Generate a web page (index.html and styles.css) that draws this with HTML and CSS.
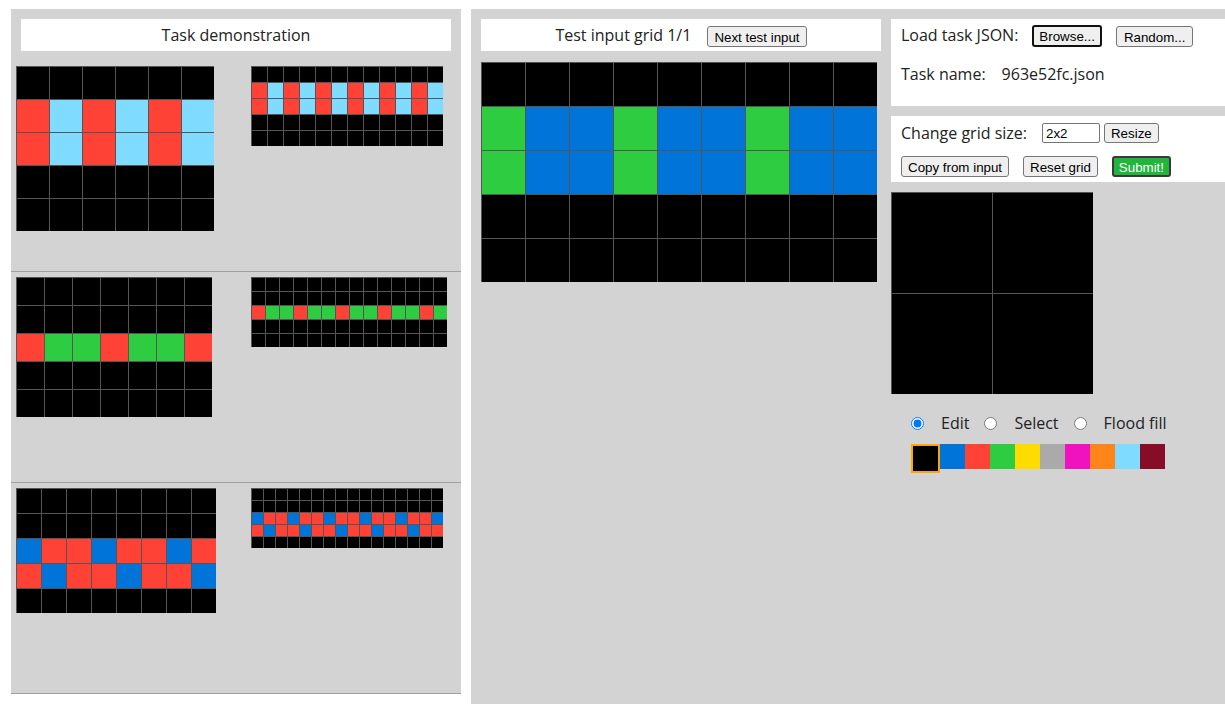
FILE: index.html
```html
<!DOCTYPE html>
<html>
<head>
<meta charset="utf-8">
<title>ARC testing interface</title>
<link rel="stylesheet" href="styles.css">
</head>
<body>
<div class="workspace">
  <section class="demo">
    <div class="demo-title">Task demonstration</div>
    <div class="pairs">
      <div class="pair">
        <div class="pair-in">
          <div class="grid s33">
            <div class="r"><i></i><i></i><i></i><i></i><i></i><i></i></div>
            <div class="r"><i class="k2"></i><i class="k8"></i><i class="k2"></i><i class="k8"></i><i class="k2"></i><i class="k8"></i></div>
            <div class="r"><i class="k2"></i><i class="k8"></i><i class="k2"></i><i class="k8"></i><i class="k2"></i><i class="k8"></i></div>
            <div class="r"><i></i><i></i><i></i><i></i><i></i><i></i></div>
            <div class="r"><i></i><i></i><i></i><i></i><i></i><i></i></div>
          </div>
        </div>
        <div class="pair-out">
          <div class="grid s16">
            <div class="r"><i></i><i></i><i></i><i></i><i></i><i></i><i></i><i></i><i></i><i></i><i></i><i></i></div>
            <div class="r"><i class="k2"></i><i class="k8"></i><i class="k2"></i><i class="k8"></i><i class="k2"></i><i class="k8"></i><i class="k2"></i><i class="k8"></i><i class="k2"></i><i class="k8"></i><i class="k2"></i><i class="k8"></i></div>
            <div class="r"><i class="k2"></i><i class="k8"></i><i class="k2"></i><i class="k8"></i><i class="k2"></i><i class="k8"></i><i class="k2"></i><i class="k8"></i><i class="k2"></i><i class="k8"></i><i class="k2"></i><i class="k8"></i></div>
            <div class="r"><i></i><i></i><i></i><i></i><i></i><i></i><i></i><i></i><i></i><i></i><i></i><i></i></div>
            <div class="r"><i></i><i></i><i></i><i></i><i></i><i></i><i></i><i></i><i></i><i></i><i></i><i></i></div>
          </div>
        </div>
      </div>
      <div class="pair">
        <div class="pair-in">
          <div class="grid s28">
            <div class="r"><i></i><i></i><i></i><i></i><i></i><i></i><i></i></div>
            <div class="r"><i></i><i></i><i></i><i></i><i></i><i></i><i></i></div>
            <div class="r"><i class="k2"></i><i class="k3"></i><i class="k3"></i><i class="k2"></i><i class="k3"></i><i class="k3"></i><i class="k2"></i></div>
            <div class="r"><i></i><i></i><i></i><i></i><i></i><i></i><i></i></div>
            <div class="r"><i></i><i></i><i></i><i></i><i></i><i></i><i></i></div>
          </div>
        </div>
        <div class="pair-out">
          <div class="grid s14">
            <div class="r"><i></i><i></i><i></i><i></i><i></i><i></i><i></i><i></i><i></i><i></i><i></i><i></i><i></i><i></i></div>
            <div class="r"><i></i><i></i><i></i><i></i><i></i><i></i><i></i><i></i><i></i><i></i><i></i><i></i><i></i><i></i></div>
            <div class="r"><i class="k2"></i><i class="k3"></i><i class="k3"></i><i class="k2"></i><i class="k3"></i><i class="k3"></i><i class="k2"></i><i class="k3"></i><i class="k3"></i><i class="k2"></i><i class="k3"></i><i class="k3"></i><i class="k2"></i><i class="k3"></i></div>
            <div class="r"><i></i><i></i><i></i><i></i><i></i><i></i><i></i><i></i><i></i><i></i><i></i><i></i><i></i><i></i></div>
            <div class="r"><i></i><i></i><i></i><i></i><i></i><i></i><i></i><i></i><i></i><i></i><i></i><i></i><i></i><i></i></div>
          </div>
        </div>
      </div>
      <div class="pair">
        <div class="pair-in">
          <div class="grid s25">
            <div class="r"><i></i><i></i><i></i><i></i><i></i><i></i><i></i><i></i></div>
            <div class="r"><i></i><i></i><i></i><i></i><i></i><i></i><i></i><i></i></div>
            <div class="r"><i class="k1"></i><i class="k2"></i><i class="k2"></i><i class="k1"></i><i class="k2"></i><i class="k2"></i><i class="k1"></i><i class="k2"></i></div>
            <div class="r"><i class="k2"></i><i class="k1"></i><i class="k2"></i><i class="k2"></i><i class="k1"></i><i class="k2"></i><i class="k2"></i><i class="k1"></i></div>
            <div class="r"><i></i><i></i><i></i><i></i><i></i><i></i><i></i><i></i></div>
          </div>
        </div>
        <div class="pair-out">
          <div class="grid s12">
            <div class="r"><i></i><i></i><i></i><i></i><i></i><i></i><i></i><i></i><i></i><i></i><i></i><i></i><i></i><i></i><i></i><i></i></div>
            <div class="r"><i></i><i></i><i></i><i></i><i></i><i></i><i></i><i></i><i></i><i></i><i></i><i></i><i></i><i></i><i></i><i></i></div>
            <div class="r"><i class="k1"></i><i class="k2"></i><i class="k2"></i><i class="k1"></i><i class="k2"></i><i class="k2"></i><i class="k1"></i><i class="k2"></i><i class="k2"></i><i class="k1"></i><i class="k2"></i><i class="k2"></i><i class="k1"></i><i class="k2"></i><i class="k2"></i><i class="k1"></i></div>
            <div class="r"><i class="k2"></i><i class="k1"></i><i class="k2"></i><i class="k2"></i><i class="k1"></i><i class="k2"></i><i class="k2"></i><i class="k1"></i><i class="k2"></i><i class="k2"></i><i class="k1"></i><i class="k2"></i><i class="k2"></i><i class="k1"></i><i class="k2"></i><i class="k2"></i></div>
            <div class="r"><i></i><i></i><i></i><i></i><i></i><i></i><i></i><i></i><i></i><i></i><i></i><i></i><i></i><i></i><i></i><i></i></div>
          </div>
        </div>
      </div>
    </div>
  </section>

  <section class="test-panel">
    <div class="test-col">
      <div class="test-title">
        <span>Test input grid 1/1</span>
        <button class="btn next-btn">Next test input</button>
      </div>
      <div class="grid s44 test-grid">
        <div class="r"><i></i><i></i><i></i><i></i><i></i><i></i><i></i><i></i><i></i></div>
        <div class="r"><i class="k3"></i><i class="k1"></i><i class="k1"></i><i class="k3"></i><i class="k1"></i><i class="k1"></i><i class="k3"></i><i class="k1"></i><i class="k1"></i></div>
        <div class="r"><i class="k3"></i><i class="k1"></i><i class="k1"></i><i class="k3"></i><i class="k1"></i><i class="k1"></i><i class="k3"></i><i class="k1"></i><i class="k1"></i></div>
        <div class="r"><i></i><i></i><i></i><i></i><i></i><i></i><i></i><i></i><i></i></div>
        <div class="r"><i></i><i></i><i></i><i></i><i></i><i></i><i></i><i></i><i></i></div>
      </div>
    </div>

    <div class="ctrl-col">
      <div class="box box-load">
        <div class="row row-load">
          <span>Load task JSON:</span>
          <button class="btn btn-browse">Browse...</button>
          <button class="btn btn-random">Random...</button>
        </div>
        <div class="row row-name">
          <span>Task name:</span>
          <span class="task-name">963e52fc.json</span>
        </div>
      </div>
      <div class="box box-edit">
        <div class="row row-size">
          <span>Change grid size:</span>
          <input class="size-input" type="text" value="2x2">
          <button class="btn btn-resize">Resize</button>
        </div>
        <div class="row row-actions">
          <button class="btn">Copy from input</button>
          <button class="btn btn-gap">Reset grid</button>
          <button class="btn btn-gap btn-submit">Submit!</button>
        </div>
      </div>
      <div class="grid s101 out-grid">
        <div class="r"><i></i><i></i></div>
        <div class="r"><i></i><i></i></div>
      </div>
      <div class="tools">
        <input type="radio" name="tool" id="t-edit" checked><label for="t-edit">Edit</label>
        <input type="radio" name="tool" id="t-select"><label for="t-select">Select</label>
        <input type="radio" name="tool" id="t-fill"><label for="t-fill">Flood fill</label>
      </div>
      <div class="palette">
        <span class="sw k0 selected"></span>
        <span class="sw k1"></span>
        <span class="sw k2"></span>
        <span class="sw k3"></span>
        <span class="sw k4"></span>
        <span class="sw k5"></span>
        <span class="sw k6"></span>
        <span class="sw k7"></span>
        <span class="sw k8"></span>
        <span class="sw k9"></span>
      </div>
    </div>
  </section>
</div>
</body>
</html>
```

FILE: styles.css
```css
html, body {
  margin: 0;
  padding: 0;
  overflow: hidden;
  background: #fff;
}

body {
  font-family: "Open Sans", "Noto Sans", sans-serif;
  font-size: 16px;
  color: #222;
}

.workspace {
  display: flex;
  align-items: flex-start;
  padding: 9px 0 0 11px;
}

/* ---------- demonstration panel ---------- */
.demo {
  flex: none;
  width: 450px;
  background: #d3d3d3;
  padding-top: 10px;
}

.demo-title {
  margin: 0 10px;
  height: 32px;
  background: #fff;
  display: flex;
  align-items: center;
  justify-content: center;
}

.pairs {
  margin-top: 10px;
}

.pair {
  display: flex;
  align-items: flex-start;
  box-sizing: border-box;
  height: 211px;
  padding: 5px 0 0 5px;
  border-bottom: 1px solid #a0a0a0;
}

.pair-in {
  flex: none;
  width: 235px;
}

/* ---------- grids ---------- */
.grid {
  display: inline-flex;
  flex-direction: column;
  vertical-align: top;
}

.grid .r {
  display: flex;
}

.grid i {
  display: block;
  box-sizing: border-box;
  width: var(--s);
  height: var(--s);
  border-left: 1px solid #555;
  border-top: 1px solid #555;
  background: #000;
}

.s12 { --s: 12px; }
.s14 { --s: 14px; }
.s16 { --s: 16px; }
.s25 { --s: 25px; }
.s28 { --s: 28px; }
.s33 { --s: 33px; }
.s44 { --s: 44px; }
.s101 { --s: 101px; }

.k0 { background: #000 !important; }
.k1 { background: #0074d9 !important; }
.k2 { background: #ff4136 !important; }
.k3 { background: #2ecc40 !important; }
.k4 { background: #ffdc00 !important; }
.k5 { background: #aaaaaa !important; }
.k6 { background: #f012be !important; }
.k7 { background: #ff851b !important; }
.k8 { background: #7fdbff !important; }
.k9 { background: #870c25 !important; }

/* ---------- test panel ---------- */
.test-panel {
  flex: none;
  margin-left: 10px;
  width: 744px;
  height: 675px;
  background: #d3d3d3;
  padding: 10px 0 10px 10px;
  display: flex;
  align-items: flex-start;
  overflow: hidden;
}

.test-col {
  flex: none;
  width: 400px;
}

.test-title {
  height: 32px;
  background: #fff;
  display: flex;
  align-items: center;
  justify-content: center;
}

.test-grid {
  margin-top: 11px;
}

/* ---------- buttons ---------- */
.btn {
  font-family: "Liberation Sans", Arial, sans-serif;
  font-size: 13.33px;
  color: #000;
  background: #efefef;
  border: 1px solid #767676;
  border-radius: 3px;
  height: 21px;
  padding: 2px 6px 0;
  margin: 0;
  line-height: normal;
}

.next-btn {
  margin-left: 16px;
  margin-top: 2px;
}

/* ---------- control column ---------- */
.ctrl-col {
  flex: none;
  width: 334px;
  margin-left: 10px;
}

.box {
  background: #fff;
  padding: 0 10px;
}

.row {
  display: flex;
  align-items: center;
}

.box-load {
  height: 87px;
}

.row-load {
  height: 32px;
}

.btn-browse {
  margin-left: 14px;
  border: 2px solid #111;
  padding: 1px 5px 0;
  height: 22px;
  margin-top: 1px;
}

.btn-random {
  margin-left: 14px;
  margin-top: 2px;
  padding: 2px 7px 0;
}

.row-name {
  margin-top: 7px;
  height: 32px;
}

.task-name {
  margin-left: 16px;
}

.box-edit {
  margin-top: 10px;
  height: 66px;
  padding-top: 5px;
  box-sizing: border-box;
}

.row-size {
  height: 24px;
}

.size-input {
  margin-left: 15px;
  width: 58px;
  height: 20px;
  box-sizing: border-box;
  border: 1px solid #767676;
  border-radius: 2px;
  padding: 1px 3px 0;
  font-family: "Liberation Sans", Arial, sans-serif;
  font-size: 13.33px;
  color: #000;
}

.btn-resize {
  margin-left: 4px;
  height: 20px;
  padding-top: 1px;
}

.row-actions {
  margin-top: 11px;
}

.btn-gap {
  margin-left: 14px;
}

.btn-submit {
  background: #21b53d;
  color: #fff;
  border: 2px solid #3a3a3a;
  padding: 1px 5px 0;
}

.out-grid {
  margin-top: 10px;
}

.tools {
  display: flex;
  align-items: center;
  height: 24px;
  margin-top: 17px;
  padding-left: 20px;
}

.tools input {
  margin: 0;
  width: 13px;
  height: 13px;
}

.tools label {
  margin-left: 17px;
  margin-right: 15px;
}

.palette {
  display: flex;
  align-items: flex-start;
  margin-top: 9px;
  padding-left: 20px;
}

.sw {
  display: block;
  width: 25px;
  height: 25px;
}

.sw.selected {
  border: 2px solid #ffa500;
}
```
